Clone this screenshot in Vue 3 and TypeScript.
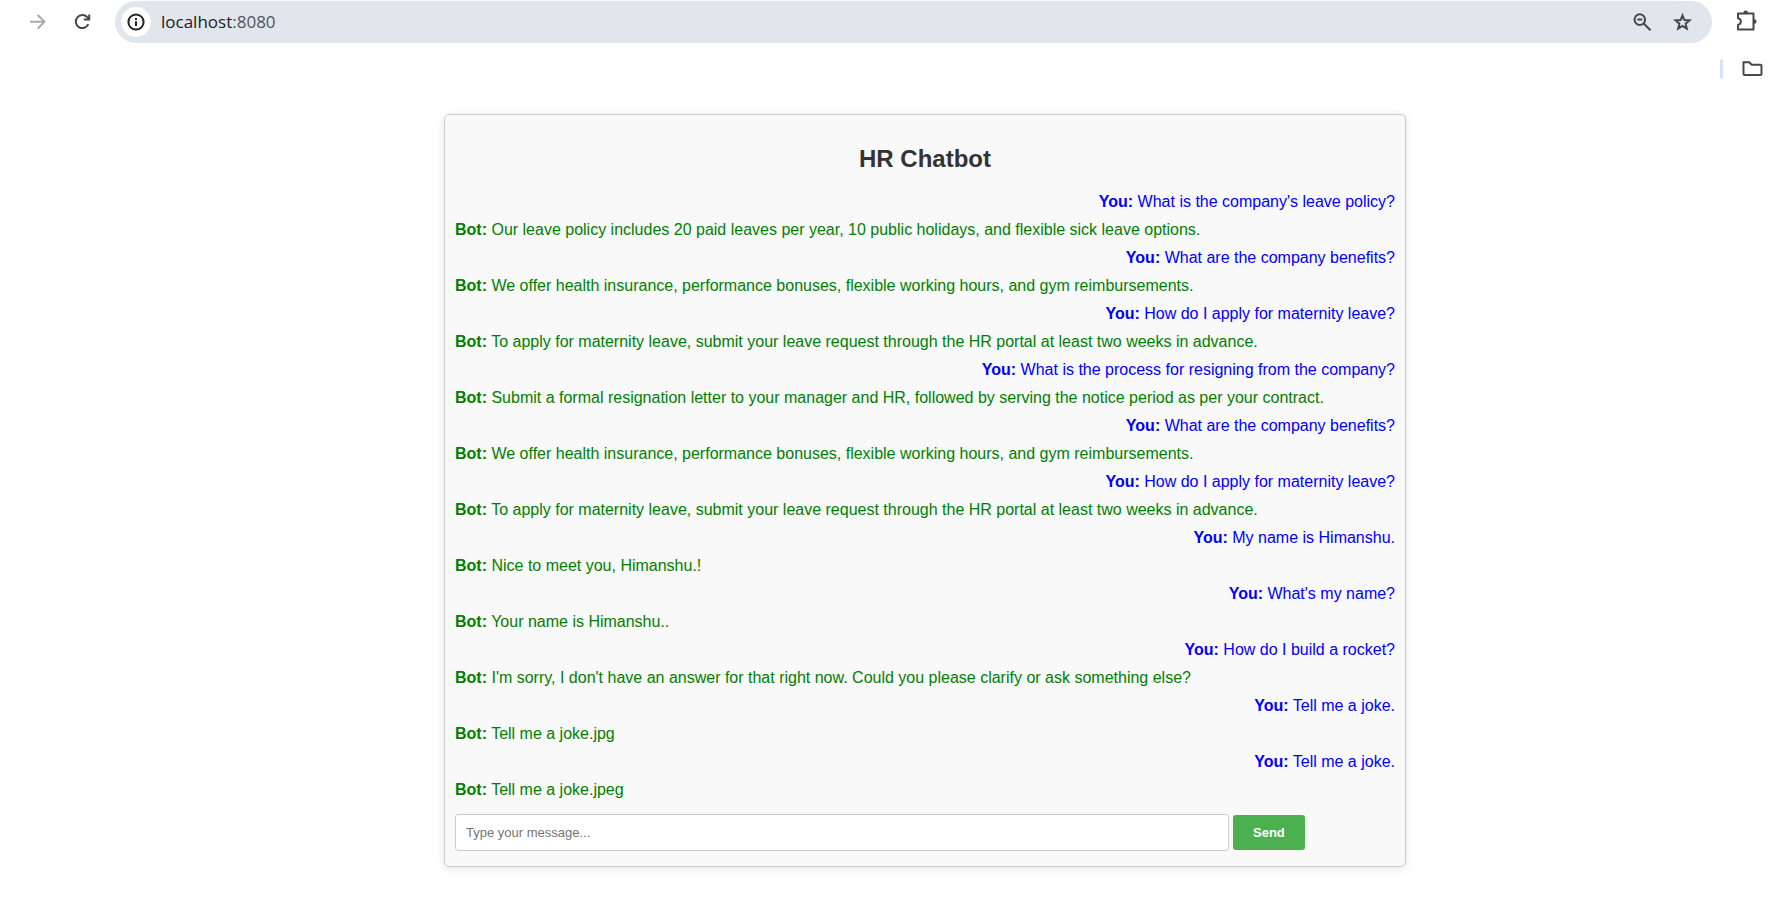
<script setup lang="ts">
import { ref } from 'vue'

interface Message {
  from: 'You' | 'Bot'
  text: string
}

const leave = 'To apply for maternity leave, submit your leave request through the HR portal at least two weeks in advance.'
const benefits = 'We offer health insurance, performance bonuses, flexible working hours, and gym reimbursements.'

const messages = ref<Message[]>([
  { from: 'You', text: "What is the company's leave policy?" },
  { from: 'Bot', text: 'Our leave policy includes 20 paid leaves per year, 10 public holidays, and flexible sick leave options.' },
  { from: 'You', text: 'What are the company benefits?' },
  { from: 'Bot', text: benefits },
  { from: 'You', text: 'How do I apply for maternity leave?' },
  { from: 'Bot', text: leave },
  { from: 'You', text: 'What is the process for resigning from the company?' },
  { from: 'Bot', text: 'Submit a formal resignation letter to your manager and HR, followed by serving the notice period as per your contract.' },
  { from: 'You', text: 'What are the company benefits?' },
  { from: 'Bot', text: benefits },
  { from: 'You', text: 'How do I apply for maternity leave?' },
  { from: 'Bot', text: leave },
  { from: 'You', text: 'My name is Himanshu.' },
  { from: 'Bot', text: 'Nice to meet you, Himanshu.!' },
  { from: 'You', text: "What's my name?" },
  { from: 'Bot', text: 'Your name is Himanshu..' },
  { from: 'You', text: 'How do I build a rocket?' },
  { from: 'Bot', text: "I'm sorry, I don't have an answer for that right now. Could you please clarify or ask something else?" },
  { from: 'You', text: 'Tell me a joke.' },
  { from: 'Bot', text: 'Tell me a joke.jpg' },
  { from: 'You', text: 'Tell me a joke.' },
  { from: 'Bot', text: 'Tell me a joke.jpeg' },
])

const draft = ref('')

function send(): void {
  const text = draft.value.trim()
  if (!text) return
  messages.value.push({ from: 'You', text })
  draft.value = ''
}
</script>

<template>
  <header class="browser">
    <div class="toolbar">
      <button class="icon-button forward" type="button" aria-label="Forward" disabled>
        <svg width="20" height="20" viewBox="0 0 20 20"><path d="M3 9.800H17.500M10.700 3 17.500 9.800l-6.800 6.800" /></svg>
      </button>
      <button class="icon-button reload" type="button" aria-label="Reload">
        <svg width="20" height="20" viewBox="0 0 20 20">
          <path d="M16.300 12.200A6.500 6.500 0 1 1 15.200 5.200L16.800 7" />
          <path d="M17.200 2.500V7.600H11.800" />
        </svg>
      </button>
      <div class="address">
        <button class="site-info" type="button" aria-label="View site information">
          <svg width="20" height="20" viewBox="0 0 20 20">
            <circle cx="10" cy="10" r="7.600" />
            <path d="M10 9.200V14M10 6V7.900" />
          </svg>
        </button>
        <span class="url">localhost<span class="port">:8080</span></span>
        <button class="icon-button" type="button" aria-label="Zoom">
          <svg width="20" height="20" viewBox="0 0 20 20">
            <circle cx="6.800" cy="7.600" r="5.300" />
            <path d="M10.700 11.500 17.500 18.300M4.300 7.600H9.300" />
          </svg>
        </button>
        <button class="icon-button" type="button" aria-label="Bookmark this tab">
          <svg width="20" height="20" viewBox="0 0 20 20">
            <path d="M9.500 3.300 11.400 8 16.500 8.400 12.600 11.700 13.800 16.700 9.500 14 5.200 16.700 6.400 11.700 2.500 8.400 7.600 8Z" />
          </svg>
        </button>
      </div>
      <button class="icon-button extensions" type="button" aria-label="Extensions">
        <svg width="24" height="24" viewBox="0 0 24 24">
          <path stroke-linejoin="round" d="M4 4.500H19.500V20.500H4V15.900C7.800 15.200 7.800 10 4 9.300Z" />
          <path class="solid" d="M9.300 4.500a2.400 3 0 0 1 4.800 0ZM19.500 10.200a3 2.400 0 0 1 0 4.800Z" />
        </svg>
      </button>
    </div>
    <div class="bookmarks">
      <span class="divider"></span>
      <button class="icon-button" type="button" aria-label="All bookmarks">
        <svg width="24" height="20" viewBox="0 0 24 20">
          <path d="M3.500 3.300H9.200L11.700 5.800H20.500Q21.500 5.800 21.500 6.800V15Q21.500 16 20.500 16H4.500Q3.500 16 3.500 15V3.300Z" />
        </svg>
      </button>
    </div>
  </header>

  <main class="page">
    <section class="chat">
      <h2>HR Chatbot</h2>
      <div class="messages">
        <div v-for="(message, i) in messages" :key="i" :class="message.from === 'You' ? 'user' : 'bot'">
          <strong>{{ message.from }}:</strong> {{ message.text }}
        </div>
      </div>
      <form class="composer" @submit.prevent="send">
        <input v-model="draft" type="text" aria-label="Message" placeholder="Type your message..." />
        <button type="submit">Send</button>
      </form>
    </section>
  </main>
</template>

<style>
body {
  margin: 0;
  background: #fff;
}
</style>

<style scoped>
.browser {
  font-family: "Open Sans", "Noto Sans", sans-serif;
}

.toolbar {
  display: flex;
  align-items: center;
  height: 44px;
  padding: 0 14px 0 27px;
}

button {
  margin: 0;
  border: 0;
  cursor: pointer;
}

.icon-button {
  display: flex;
  flex: none;
  padding: 0;
  background: none;
  color: #474747;
}

svg {
  display: block;
  fill: none;
  stroke: currentColor;
  stroke-width: 2;
}

.solid {
  fill: currentColor;
  stroke: none;
}

.forward {
  margin-right: 25px;
  color: #aaa;
}

.reload {
  margin-right: 23px;
}

.address {
  display: flex;
  flex: 1;
  align-items: center;
  box-sizing: border-box;
  height: 42px;
  padding: 0 19px 0 6px;
  gap: 20px;
  border-radius: 21px;
  background: #e1e5ec;
}

.site-info {
  display: flex;
  align-items: center;
  justify-content: center;
  flex: none;
  width: 30px;
  height: 30px;
  padding: 0;
  border-radius: 50%;
  background: #fff;
  color: #202124;
}

.url {
  flex: 1;
  margin-left: -10px;
  font-size: 17px;
  line-height: 24px;
  color: #202124;
}

.port {
  color: #50545a;
}

.extensions {
  margin-left: 22px;
}

.extensions svg {
  margin-bottom: 2px;
}

.bookmarks {
  display: flex;
  align-items: center;
  justify-content: flex-end;
  gap: 17px;
  height: 50px;
  padding-right: 8px;
}

.divider {
  width: 3px;
  height: 20px;
  border-radius: 2px;
  background: #d3e3fd;
}

.page {
  padding: 20px 0 40px 78px;
  font-family: Arial, "Liberation Sans", sans-serif;
}

.chat {
  box-sizing: border-box;
  max-width: 962px;
  margin: 0 auto;
  padding: 30px 10px 15px;
  border: 1px solid #ccc;
  border-radius: 5px;
  background: #f9f9f9;
  box-shadow: 0 2px 10px rgba(0, 0, 0, 0.1);
}

h2 {
  margin: 0 0 20px;
  font-size: 24px;
  line-height: 28px;
  text-align: center;
  color: #333;
}

.messages {
  display: flex;
  flex-direction: column;
  gap: 10px;
  font-size: 16px;
  line-height: 18px;
}

.user {
  text-align: right;
  color: blue;
}

.bot {
  color: green;
}

.composer {
  display: flex;
  align-items: center;
  gap: 4px;
  margin-top: 15px;
}

.composer input {
  width: 80%;
  height: 15px;
  padding: 10px;
  border: 1px solid #ccc;
  border-radius: 3px;
  background: #fff;
  font: 13px/15px Arial, "Liberation Sans", sans-serif;
}

.composer input::placeholder {
  color: #757575;
}

.composer button {
  padding: 10px 20px;
  border-radius: 3px;
  background: #4caf50;
  color: #fff;
  font: bold 13px/15px Arial, "Liberation Sans", sans-serif;
}
</style>
